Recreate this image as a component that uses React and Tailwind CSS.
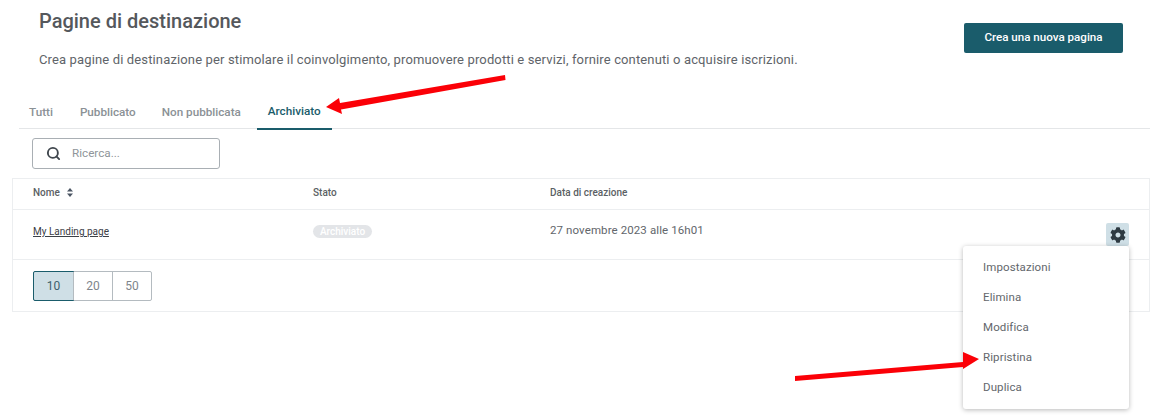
import { Search } from "lucide-react";
import { FaCog } from "react-icons/fa";

const tabs = ["Tutti", "Pubblicato", "Non pubblicata", "Archiviato"];
const menuItems = ["Impostazioni", "Elimina", "Modifica", "Ripristina", "Duplica"];
const pageSizes = ["10", "20", "50"];

function SortIcon() {
  return (
    <svg width="6" height="9" viewBox="0 0 6 9" className="ml-[7px]" fill="#4b5563">
      <path d="M3 0 6 3.4H0z" />
      <path d="M3 9 6 5.6H0z" />
    </svg>
  );
}

function Arrows() {
  return (
    <svg width="1161" height="420" viewBox="0 0 1161 420" className="pointer-events-none absolute left-0 top-0" fill="#fb0007">
      <path d="M505 75 505.5 80 341 109.5 342 114 326 107 339 98 340 103z" />
      <path d="M795 376 963 362 963 352 979 359 963 369 963 367 795 381z" />
    </svg>
  );
}

export default function App() {
  return (
    <div className="relative h-[420px] w-[1161px] overflow-hidden bg-white font-['Roboto',sans-serif] text-[#5d6166]">
      <div className="flex items-start justify-between pl-[39px] pr-[38px]">
        <div>
          <h1 className="mt-[9px] text-[20px] leading-[24px] font-medium text-[#55585c]">Pagine di destinazione</h1>
          <p className="mt-[16px] text-[13px] leading-[22px] tracking-[0.137px] text-[#606469]">
            Crea pagine di destinazione per stimolare il coinvolgimento, promuovere prodotti e servizi, fornire contenuti o acquisire iscrizioni.
          </p>
        </div>
        <button className="mt-[23px] h-[30px] w-[159px] rounded-[2px] bg-[#1a5c6b] text-[11.6px] font-medium text-white">Crea una nuova pagina</button>
      </div>

      <div className="ml-[19px] mr-[11px] mt-[28px] flex h-[30px] gap-[6px] border-b border-[#e4e6e8]">
        {tabs.map((tab) => (
          <div
            key={tab}
            className={
              tab === "Archiviato"
                ? "-mb-px flex h-[31px] items-center border-b-2 border-[#1a5c6b] px-[11px] pb-[4px] text-[11.7px] font-medium text-[#1a5c6b]"
                : "flex h-[30px] items-center px-[10px] pb-[2px] text-[11.7px] font-medium text-[#8b9196] first:mr-px"
            }
          >
            {tab}
          </div>
        ))}
      </div>

      <div className="ml-[32px] mt-[9px] flex h-[31px] w-[188px] items-center rounded-[3px] border border-[#a9afb4] pl-[13px]">
        <Search size={15} strokeWidth={3} className="text-[#3f464d]" />
        <span className="ml-[11px] text-[11.7px] text-[#8f959a]">Ricerca...</span>
      </div>

      <div className="ml-[12px] mr-[11px] mt-[9px] h-[134px] border border-[#eceef0]">
        <div className="flex h-[31px] items-center border-b border-[#eceef0] pb-[4px] text-[10px] font-medium text-[#5b5f64]">
          <div className="flex w-[300px] items-center pl-[20px]">
            Nome
            <SortIcon />
          </div>
          <div className="w-[237px]">Stato</div>
          <div>Data di creazione</div>
        </div>
        <div className="flex h-[50px] items-center border-b border-[#eceef0] pb-[6px]">
          <div className="w-[300px] pl-[20px] text-[10px] text-[#3c4046] underline">My Landing page</div>
          <div className="flex w-[237px] items-center">
            <span className="flex h-[13px] w-[59px] items-center justify-center rounded-full bg-[#e3e5e8] text-[10px] font-medium text-white">Archiviato</span>
          </div>
          <div className="mb-[2px] text-[11.5px] tracking-[0.1px] text-[#62666b]">27 novembre 2023 alle 16h01</div>
        </div>
        <div className="ml-[20px] mt-[11px] flex h-[30px] w-[119px] rounded-[2px] border border-[#b4bbc0] text-[12px]">
          {pageSizes.map((size) => (
            <div
              key={size}
              className={
                size === "10"
                  ? "-m-px flex h-[30px] w-[41px] items-center justify-center rounded-l-[2px] border border-[#1a5c6b] bg-[#cfdfe6] text-[#3d5f6c]"
                  : "flex flex-1 items-center justify-center border-l border-[#b4bbc0] text-[#7e858b] first:border-l-0"
              }
            >
              {size}
            </div>
          ))}
        </div>
      </div>

      <div className="absolute left-[1106px] top-[223px] flex h-[23px] w-[23px] items-center justify-center rounded-[2px] bg-[#cfdfe6] text-[#2e3a42]">
        <FaCog size={16} />
      </div>

      <div className="absolute left-[963px] top-[246px] flex h-[163px] w-[166px] flex-col rounded-[3px] bg-white pb-[5px] pt-[7px] shadow-[0_1px_5px_rgba(0,0,0,0.28)]">
        {menuItems.map((item) => (
          <div key={item} className="flex h-[30px] items-center pl-[20px] text-[11.5px] tracking-[0.1px] text-[#63676c]">
            {item}
          </div>
        ))}
      </div>

      <Arrows />
    </div>
  );
}
